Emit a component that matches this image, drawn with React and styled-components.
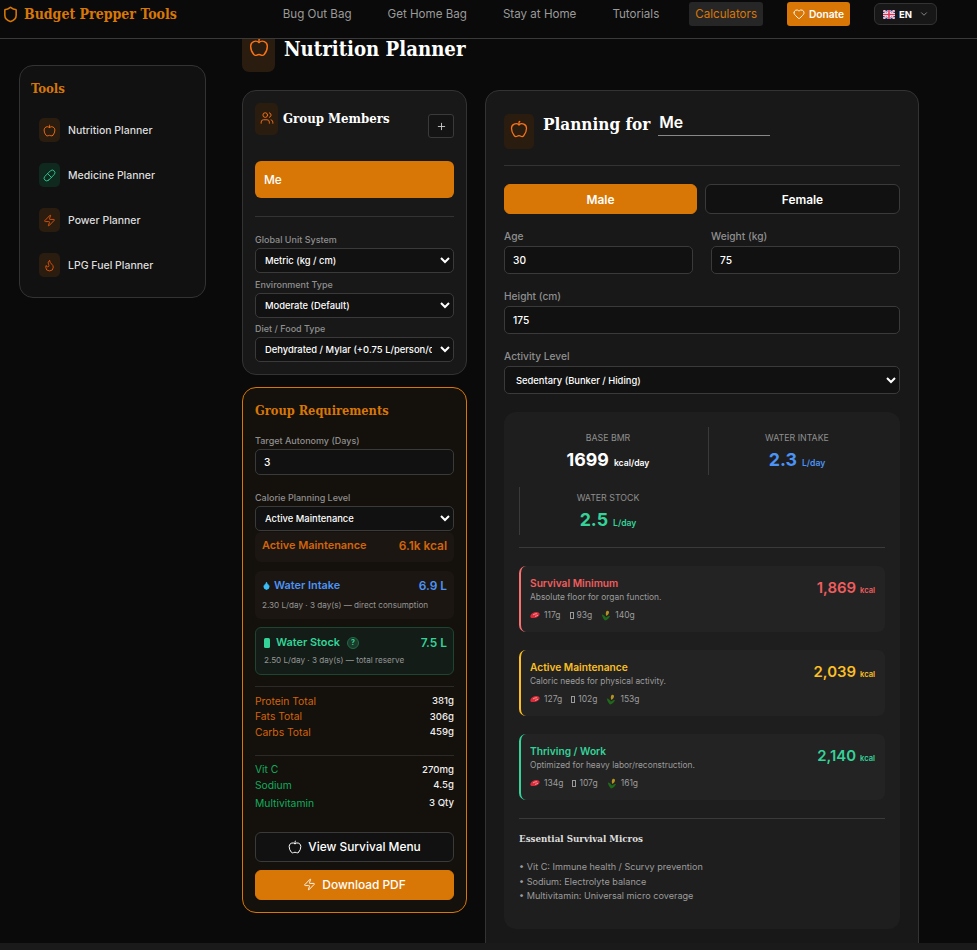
import React from 'react'
import styled, { createGlobalStyle } from 'styled-components'
import { Apple, ChevronDown, Droplet, Flame, Heart, Pill, Plus, Shield, Users, Zap } from 'lucide-react'

const SLAB = `"DejaVu Serif Condensed", "DejaVu Serif", "Liberation Serif", serif`
const ORANGE = '#d97706'

const GlobalStyle = createGlobalStyle`
  html, body {
    margin: 0;
    height: 100%;
    overflow: hidden;
    background: #0a0a0a;
    color-scheme: dark;
  }
  * { box-sizing: border-box; }
  body {
    font-family: Inter, "Liberation Sans", sans-serif;
    color: #fff;
  }
`

const Header = styled.header`
  position: fixed;
  top: 0;
  left: 0;
  right: 0;
  z-index: 5;
  height: 39px;
  display: flex;
  align-items: flex-start;
  justify-content: space-between;
  padding: 2px 40px 0 2px;
  background: #0a0a0a;
  border-bottom: 1px solid #3a3a3a;
`
const Brand = styled.div`
  display: flex;
  align-items: center;
  gap: 5px;
  height: 24px;
  color: ${ORANGE};
  font-family: ${SLAB};
  font-weight: 700;
  font-size: 14px;
`
const Nav = styled.nav`
  display: flex;
  align-items: flex-start;
  gap: 24px;
`
const NavLink = styled.a`
  height: 24px;
  padding: 0 6px;
  display: flex;
  align-items: center;
  border-radius: 3px;
  font-size: 11.6px;
  color: ${p => (p.$active ? ORANGE : '#9a9a9a')};
  background: ${p => (p.$active ? '#262626' : 'transparent')};
`
const Donate = styled.a`
  height: 24px;
  width: 63px;
  display: flex;
  align-items: center;
  justify-content: center;
  gap: 4px;
  border-radius: 3px;
  background: ${ORANGE};
  color: #fff;
  font-size: 10.2px;
  font-weight: 600;
  padding-bottom: 1px;
`
const Lang = styled.div`
  height: 22px;
  width: 63px;
  margin-top: 1px;
  display: flex;
  align-items: center;
  gap: 4px;
  padding-left: 8px;
  border: 1px solid #333;
  border-radius: 6px;
  background: #171717;
  font-size: 9.5px;
  font-weight: 700;
`
const LangChevron = styled(ChevronDown)`
  margin-left: 3px;
  color: #999;
`
const Page = styled.div`
  display: flex;
  align-items: flex-start;
  gap: 36px;
  padding: 31px 58px 0 19px;
`
const Sidebar = styled.aside`
  width: 187px;
  height: 233px;
  flex: none;
  margin-top: 34px;
  padding: 14px 11px;
  background: #111;
  border: 1px solid #333;
  border-radius: 14px;
`
const SideTitle = styled.h3`
  margin: 0 0 21px;
  color: ${ORANGE};
  font-family: ${SLAB};
  font-weight: 700;
  font-size: 13px;
  line-height: 17px;
`
const SideList = styled.div`
  display: flex;
  flex-direction: column;
  gap: 21px;
  padding-left: 8px;
`
const SideItem = styled.div`
  display: flex;
  align-items: center;
  gap: 8px;
  font-size: 10.5px;
  font-weight: 500;
  color: #ddd;
`
const IconBox = styled.span`
  flex: none;
  display: flex;
  align-items: ${p => p.$align || 'center'};
  justify-content: center;
  width: ${p => p.$w}px;
  height: ${p => p.$h}px;
  padding-top: ${p => p.$top || 0}px;
  border-radius: ${p => p.$r || 5}px;
  color: ${p => p.$color || '#f97316'};
  background: ${p => p.$bg || '#2b1c10'};
`
const Content = styled.main`
  flex: 1;
  min-width: 0;
  display: flex;
  flex-direction: column;
  gap: 18px;
`
const TitleRow = styled.div`
  display: flex;
  align-items: flex-start;
  gap: 9px;
`
const PageTitle = styled.h1`
  margin: 6px 0 0;
  font-family: ${SLAB};
  font-weight: 700;
  font-size: 20.2px;
  line-height: 24px;
`
const Columns = styled.div`
  display: flex;
  align-items: flex-start;
  gap: 18px;
`
const LeftCol = styled.div`
  width: 225px;
  flex: none;
  display: flex;
  flex-direction: column;
  gap: 12px;
`
const GroupCard = styled.section`
  height: 285px;
  padding: 12px;
  background: #181818;
  border: 1px solid #333;
  border-radius: 14px;
`
const GroupHead = styled.div`
  display: flex;
  align-items: flex-start;
  gap: 5px;
  height: 58px;
`
const CardTitle = styled.h2`
  margin: 7px 0 0;
  flex: 1;
  font-family: ${SLAB};
  font-weight: 700;
  font-size: 13.1px;
  line-height: 17px;
`
const PlusBtn = styled.button`
  width: 26px;
  height: 24px;
  margin-top: 11px;
  padding: 0;
  display: flex;
  align-items: center;
  justify-content: center;
  color: #ccc;
  background: #141414;
  border: 1px solid #3a3a3a;
  border-radius: 3px;
`
const MemberBtn = styled.div`
  height: 37px;
  display: flex;
  align-items: center;
  padding-left: 9px;
  border-radius: 6px;
  background: ${ORANGE};
  font-size: 11.9px;
  font-weight: 500;
`
const Rule = styled.hr`
  margin: ${p => p.$m || '18px 0'};
  border: 0;
  border-top: 1px solid ${p => p.$c || '#333'};
`
const Label = styled.label`
  display: block;
  font-size: ${p => p.$size || 9}px;
  font-weight: 500;
  line-height: 12px;
  color: #8f8f8f;
  margin-bottom: ${p => p.$gap || 2}px;
`
const FieldStack = styled.div`
  display: flex;
  flex-direction: column;
  gap: 5.5px;
  margin-top: -1px;
`
const Select = styled.select`
  display: block;
  width: 100%;
  height: ${p => p.$h || 25}px;
  padding: 0 ${p => p.$pad || 5}px;
  font-family: inherit;
  font-size: 9.4px;
  font-weight: 500;
  color: #fff;
  background: #111;
  border: 1px solid #3a3a3a;
  border-radius: 5px;
  outline: 0;
`
const Input = styled.input`
  display: block;
  width: 100%;
  height: ${p => p.$h || 28}px;
  padding: 0 8px;
  font-family: inherit;
  font-size: 10.2px;
  font-weight: 500;
  color: #fff;
  background: #111;
  border: 1px solid #3a3a3a;
  border-radius: 5px;
  outline: 0;
`
const ReqCard = styled.section`
  height: 526px;
  padding: 14px 12px;
  background: #14100b;
  border: 1px solid ${ORANGE};
  border-radius: 14px;
`
const ReqTitle = styled.h2`
  margin: 0 0 15px;
  color: ${ORANGE};
  font-family: ${SLAB};
  font-weight: 700;
  font-size: 12.7px;
  line-height: 18px;
`
const SummaryBox = styled.div`
  height: ${p => p.$h}px;
  margin-top: ${p => p.$mt || 0}px;
  padding: ${p => p.$pad || '7px 6px'};
  border-radius: 6px;
  background: ${p => (p.$green ? '#131c16' : '#1b1611')};
  border: 1px solid ${p => (p.$green ? '#1c4631' : 'transparent')};
`
const SummaryRow = styled.div`
  display: flex;
  align-items: center;
  justify-content: space-between;
  color: ${p => p.$c};
  font-size: 10.9px;
  font-weight: 600;
  line-height: 13px;
`
const SummaryName = styled.span`
  display: flex;
  align-items: center;
  gap: ${p => p.$gap || 3}px;
`
const SummaryValue = styled.span`
  font-size: 11.9px;
  font-weight: 600;
`
const SummaryNote = styled.div`
  margin-top: ${p => p.$mt || 8}px;
  font-size: 8.15px;
  line-height: 11px;
  color: #969696;
`
const BottleIcon = styled.span`
  width: 6px;
  height: 10px;
  border-radius: 1.5px;
  background: #34d399;
`
const HelpMark = styled.span`
  width: 12px;
  height: 12px;
  display: flex;
  align-items: center;
  justify-content: center;
  margin-left: 1px;
  border-radius: 50%;
  border: 1px solid #1f6b49;
  background: #1b3a2a;
  font-size: 7px;
  font-weight: 700;
`
const TotalRow = styled.div`
  display: flex;
  justify-content: space-between;
  align-items: center;
  height: ${p => p.$h || 15.5}px;
  font-size: 10.3px;
  color: ${p => p.$c};
`
const TotalValue = styled.span`
  font-size: 9.6px;
  color: #eee;
  font-weight: 500;
`
const WideBtn = styled.button`
  width: 100%;
  height: 30px;
  display: flex;
  align-items: center;
  justify-content: center;
  gap: 6px;
  margin-top: ${p => p.$mt || 0}px;
  padding: 0;
  font-family: inherit;
  font-size: 11.9px;
  font-weight: 500;
  color: #fff;
  background: ${p => (p.$primary ? ORANGE : '#111')};
  border: 1px solid ${p => (p.$primary ? ORANGE : '#3a3a3a')};
  border-radius: 6px;
`
const PlanCard = styled.section`
  flex: 1;
  min-width: 0;
  height: 900px;
  padding: 23px 18px;
  background: #181818;
  border: 1px solid #333;
  border-radius: 14px;
`
const PlanHead = styled.div`
  display: flex;
  align-items: flex-start;
  gap: 9px;
  height: 51px;
`
const PlanTitle = styled.h2`
  margin: 0;
  font-family: ${SLAB};
  font-weight: 700;
  font-size: 17px;
  line-height: 20px;
`
const NameInput = styled.input`
  width: 112px;
  height: 24px;
  margin-left: 8px;
  padding: 0 0 2px 1px;
  font-family: inherit;
  font-size: 15.8px;
  font-weight: 600;
  color: #fff;
  background: transparent;
  border: 0;
  border-bottom: 1px solid #888;
  outline: 0;
`
const PlanTitleRow = styled.div`
  display: flex;
  align-items: center;
  margin-top: -2px;
`
const TwoCol = styled.div`
  display: grid;
  grid-template-columns: ${p => p.$cols || '1fr 1fr'};
  gap: ${p => p.$gap || 18}px;
`
const SexBtn = styled.button`
  height: 30px;
  padding: 0;
  font-family: inherit;
  font-size: 11.9px;
  font-weight: 600;
  color: #fff;
  background: ${p => (p.$on ? ORANGE : '#111')};
  border: 1px solid ${p => (p.$on ? ORANGE : '#3a3a3a')};
  border-radius: 6px;
`
const PlanField = styled.div`
  margin-top: ${p => p.$mt || 0}px;
`
const Panel = styled.div`
  height: 517px;
  margin-top: 18px;
  padding: 15px;
  background: #1e1e1e;
  border-radius: 12px;
`
const StatGrid = styled.div`
  display: grid;
  grid-template-columns: 1fr 1fr;
  gap: 12px;
`
const Stat = styled.div`
  height: 48px;
  display: flex;
  flex-direction: column;
  align-items: center;
  padding-top: 5px;
  border-left: 1px solid ${p => (p.$line ? '#3a3a3a' : 'transparent')};
`
const StatLabel = styled.div`
  font-size: 8.8px;
  line-height: 11px;
  color: #8f8f8f;
`
const StatValue = styled.div`
  margin-top: 5px;
  font-size: 17.8px;
  font-weight: 700;
  line-height: 24px;
  color: ${p => p.$c};
`
const StatUnit = styled.span`
  margin-left: 5px;
  font-size: 8.6px;
  font-weight: 600;
`
const TierList = styled.div`
  display: flex;
  flex-direction: column;
  gap: 18px;
`
const Tier = styled.div`
  height: 66px;
  display: flex;
  justify-content: space-between;
  padding: 10px 10px 0 9px;
  background: #232323;
  border-left: 2px solid ${p => p.$c};
  border-radius: 7px;
`
const TierName = styled.div`
  font-size: 10.2px;
  font-weight: 600;
  line-height: 14px;
  color: ${p => p.$c};
`
const TierNote = styled.div`
  font-size: 8.4px;
  line-height: 14px;
  color: #9c9c9c;
`
const Macros = styled.div`
  display: flex;
  gap: 9px;
  margin-top: 5px;
  font-size: 8.5px;
  line-height: 12px;
  color: #9c9c9c;
`
const Macro = styled.span`
  display: flex;
  align-items: center;
  gap: 4px;
`
const Tofu = styled.span`
  width: 4px;
  height: 7px;
  border: 1px solid #9a9a9a;
  margin-right: -1px;
`
const TierKcal = styled.div`
  margin-top: 2px;
  font-size: 14.9px;
  font-weight: 600;
  line-height: 20px;
  color: ${p => p.$c};
`
const KcalUnit = styled.span`
  margin-left: 4px;
  font-size: 7.6px;
  font-weight: 600;
`
const MicroTitle = styled.h4`
  margin: 2px 0 15px;
  font-family: ${SLAB};
  font-weight: 700;
  font-size: 9.7px;
  line-height: 12px;
  color: #ddd;
`
const MicroLine = styled.div`
  font-size: 9.1px;
  line-height: 14.6px;
  color: #9c9c9c;
`
const Footer = styled.div`
  position: fixed;
  left: 0;
  right: 0;
  bottom: 0;
  height: 7px;
  background: #1a1a1a;
`

const UkFlag = () => (
  <svg width="12" height="9" viewBox="0 0 12 9">
    <rect width="12" height="9" fill="#2b3a8c" />
    <path d="M0 0l12 9M12 0L0 9" stroke="#fff" strokeWidth="2" />
    <path d="M0 0l12 9M12 0L0 9" stroke="#e0335a" strokeWidth=".7" />
    <path d="M6 0v9M0 4.5h12" stroke="#fff" strokeWidth="3" />
    <path d="M6 0v9M0 4.5h12" stroke="#e0335a" strokeWidth="1.6" />
  </svg>
)

const MeatIcon = () => (
  <svg width="10" height="8" viewBox="0 0 10 8">
    <path d="M.5 4.4C1.4 2.4 3.8 1 6.4 1 8.6 1 9.8 2 9.6 3.6 9.4 5.2 7.6 6.2 5.6 6.8 3.8 7.3 1.2 7.2.5 6.2.2 5.6.2 5 .5 4.4z" fill="#d92b3a" />
    <path d="M3 4c1-.8 2.6-1.4 4.2-1.2M5 5.4c1-.2 2-.6 3-1.2" stroke="#ffc0c0" strokeWidth=".7" fill="none" />
  </svg>
)

const CornIcon = () => (
  <svg width="10" height="11" viewBox="0 0 10 11">
    <path d="M5.6 1c1.3-.6 2.6.2 2.4 1.5-.2 1.4-1.3 2.9-2.6 3.4C4.6 4.8 4.6 2.2 5.6 1z" fill="#b3921f" />
    <path d="M.8 4.6C2.4 4.8 4 6 5 7.8 6 6.6 7.4 6 9 6 8 8.4 6.2 10.2 4 10.4 2.4 9.2 1.2 7 .8 4.6z" fill="#1f6a1a" />
  </svg>
)

const tools = [
  { name: 'Nutrition Planner', Icon: Apple },
  { name: 'Medicine Planner', Icon: Pill, color: '#34d399', bg: '#10291f' },
  { name: 'Power Planner', Icon: Zap, color: '#ea580c' },
  { name: 'LPG Fuel Planner', Icon: Flame, color: '#ea580c' },
]

const tiers = [
  { name: 'Survival Minimum', note: 'Absolute floor for organ function.', kcal: '1,869', c: '#f05d5e', line: '#f87171', macros: ['117g', '93g', '140g'] },
  { name: 'Active Maintenance', note: 'Caloric needs for physical activity.', kcal: '2,039', c: '#fbbf24', line: '#fbbf24', macros: ['127g', '102g', '153g'] },
  { name: 'Thriving / Work', note: 'Optimized for heavy labor/reconstruction.', kcal: '2,140', c: '#34d399', line: '#34d399', macros: ['134g', '107g', '161g'] },
]

const totals = [
  { name: 'Protein Total', value: '381g' },
  { name: 'Fats Total', value: '306g' },
  { name: 'Carbs Total', value: '459g' },
]

const micros = [
  { name: 'Vit C', value: '270mg' },
  { name: 'Sodium', value: '4.5g' },
  { name: 'Multivitamin', value: '3 Qty', h: 20 },
]

const App = () => (
  <>
    <GlobalStyle />
    <Header>
      <Brand>
        <Shield size={17} strokeWidth={2.2} />
        Budget Prepper Tools
      </Brand>
      <Nav>
        <NavLink>Bug Out Bag</NavLink>
        <NavLink>Get Home Bag</NavLink>
        <NavLink>Stay at Home</NavLink>
        <NavLink>Tutorials</NavLink>
        <NavLink $active>Calculators</NavLink>
        <Donate><Heart size={12} strokeWidth={1.8} />Donate</Donate>
        <Lang><UkFlag />EN<LangChevron size={10} /></Lang>
      </Nav>
    </Header>
    <Page>
      <Sidebar>
        <SideTitle>Tools</SideTitle>
        <SideList>
          {tools.map(({ name, Icon, color, bg }) => (
            <SideItem key={name}>
              <IconBox $w={21} $h={24} $color={color} $bg={bg}><Icon size={13} strokeWidth={1.6} /></IconBox>
              {name}
            </SideItem>
          ))}
        </SideList>
      </Sidebar>
      <Content>
        <TitleRow>
          <IconBox $w={33} $h={41} $r={7} $align="flex-start" $top={6}><Apple size={20} strokeWidth={1.7} /></IconBox>
          <PageTitle>Nutrition Planner</PageTitle>
        </TitleRow>
        <Columns>
          <LeftCol>
            <GroupCard>
              <GroupHead>
                <IconBox $w={23} $h={32} $align="flex-start" $top={8}><Users size={14} strokeWidth={1.6} /></IconBox>
                <CardTitle>Group Members</CardTitle>
                <PlusBtn><Plus size={11} /></PlusBtn>
              </GroupHead>
              <MemberBtn>Me</MemberBtn>
              <Rule />
              <FieldStack>
                <div>
                  <Label>Global Unit System</Label>
                  <Select defaultValue="metric"><option value="metric">Metric (kg / cm)</option></Select>
                </div>
                <div>
                  <Label>Environment Type</Label>
                  <Select defaultValue="moderate"><option value="moderate">Moderate (Default)</option></Select>
                </div>
                <div>
                  <Label>Diet / Food Type</Label>
                  <Select defaultValue="dry"><option value="dry">Dehydrated / Mylar (+0.75 L/person/day)</option></Select>
                </div>
              </FieldStack>
            </GroupCard>
            <ReqCard>
              <ReqTitle>Group Requirements</ReqTitle>
              <Label>Target Autonomy (Days)</Label>
              <Input $h={26} defaultValue="3" />
              <PlanField $mt={17}>
                <Label>Calorie Planning Level</Label>
                <Select defaultValue="active"><option value="active">Active Maintenance</option></Select>
              </PlanField>
              <SummaryBox $h={30} $mt={1} $pad="6px 6px">
                <SummaryRow $c="#d2640c"><span>Active Maintenance</span><SummaryValue>6.1k kcal</SummaryValue></SummaryRow>
              </SummaryBox>
              <SummaryBox $h={48} $mt={9}>
                <SummaryRow $c="#4b93f5">
                  <SummaryName><Droplet size={9} fill="#38bdf8" color="#38bdf8" />Water Intake</SummaryName>
                  <SummaryValue>6.9 L</SummaryValue>
                </SummaryRow>
                <SummaryNote>2.30 L/day · 3 day(s) — direct consumption</SummaryNote>
              </SummaryBox>
              <SummaryBox $h={48} $mt={8} $green $pad="8px 6px 8px 8px">
                <SummaryRow $c="#34d399">
                  <SummaryName $gap={6}><BottleIcon />Water Stock<HelpMark>?</HelpMark></SummaryName>
                  <SummaryValue>7.5 L</SummaryValue>
                </SummaryRow>
                <SummaryNote $mt={6}>2.50 L/day · 3 day(s) — total reserve</SummaryNote>
              </SummaryBox>
              <Rule $m="11px 0 6px" $c="#2c2a27" />
              {totals.map(t => (
                <TotalRow key={t.name} $c="#d2640c">{t.name}<TotalValue>{t.value}</TotalValue></TotalRow>
              ))}
              <Rule $m="15px 0 6px" $c="#2c2a27" />
              {micros.map(m => (
                <TotalRow key={m.name} $c="#10ad5e" $h={m.h}>{m.name}<TotalValue>{m.value}</TotalValue></TotalRow>
              ))}
              <WideBtn $mt={19}><Apple size={14} strokeWidth={1.7} />View Survival Menu</WideBtn>
              <WideBtn $mt={8} $primary><Zap size={13} strokeWidth={1.7} />Download PDF</WideBtn>
            </ReqCard>
          </LeftCol>
          <PlanCard>
            <PlanHead>
              <IconBox $w={30} $h={35} $align="flex-start" $top={6}><Apple size={18} strokeWidth={1.7} /></IconBox>
              <PlanTitleRow>
                <PlanTitle>Planning for</PlanTitle>
                <NameInput defaultValue="Me" />
              </PlanTitleRow>
            </PlanHead>
            <Rule $m="0 0 18px" />
            <TwoCol $cols="193px 1fr" $gap={8}>
              <SexBtn $on>Male</SexBtn>
              <SexBtn>Female</SexBtn>
            </TwoCol>
            <PlanField $mt={16}>
              <TwoCol>
                <div>
                  <Label $size={10.2} $gap={4}>Age</Label>
                  <Input defaultValue="30" />
                </div>
                <div>
                  <Label $size={10.2} $gap={4}>Weight (kg)</Label>
                  <Input defaultValue="75" />
                </div>
              </TwoCol>
            </PlanField>
            <PlanField $mt={16}>
              <Label $size={10.2} $gap={4}>Height (cm)</Label>
              <Input defaultValue="175" />
            </PlanField>
            <PlanField $mt={16}>
              <Label $size={10.2} $gap={4}>Activity Level</Label>
              <Select $h={28} $pad={7} defaultValue="sed"><option value="sed">Sedentary (Bunker / Hiding)</option></Select>
            </PlanField>
            <Panel>
              <StatGrid>
                <Stat>
                  <StatLabel>BASE BMR</StatLabel>
                  <StatValue $c="#fff">1699<StatUnit>kcal/day</StatUnit></StatValue>
                </Stat>
                <Stat $line>
                  <StatLabel>WATER INTAKE</StatLabel>
                  <StatValue $c="#4b93f5">2.3<StatUnit>L/day</StatUnit></StatValue>
                </Stat>
                <Stat $line>
                  <StatLabel>WATER STOCK</StatLabel>
                  <StatValue $c="#34d399">2.5<StatUnit>L/day</StatUnit></StatValue>
                </Stat>
              </StatGrid>
              <Rule $m="12px 0 18px" $c="#3a3a3a" />
              <TierList>
                {tiers.map(t => (
                  <Tier key={t.name} $c={t.line}>
                    <div>
                      <TierName $c={t.c}>{t.name}</TierName>
                      <TierNote>{t.note}</TierNote>
                      <Macros>
                        <Macro><MeatIcon />{t.macros[0]}</Macro>
                        <Macro><Tofu />{t.macros[1]}</Macro>
                        <Macro><CornIcon />{t.macros[2]}</Macro>
                      </Macros>
                    </div>
                    <TierKcal $c={t.c}>{t.kcal}<KcalUnit>kcal</KcalUnit></TierKcal>
                  </Tier>
                ))}
              </TierList>
              <Rule $m="18px 0 14px" $c="#3a3a3a" />
              <MicroTitle>Essential Survival Micros</MicroTitle>
              <MicroLine>• Vit C: Immune health / Scurvy prevention</MicroLine>
              <MicroLine>• Sodium: Electrolyte balance</MicroLine>
              <MicroLine>• Multivitamin: Universal micro coverage</MicroLine>
            </Panel>
          </PlanCard>
        </Columns>
      </Content>
    </Page>
    <Footer />
  </>
)

export default App
